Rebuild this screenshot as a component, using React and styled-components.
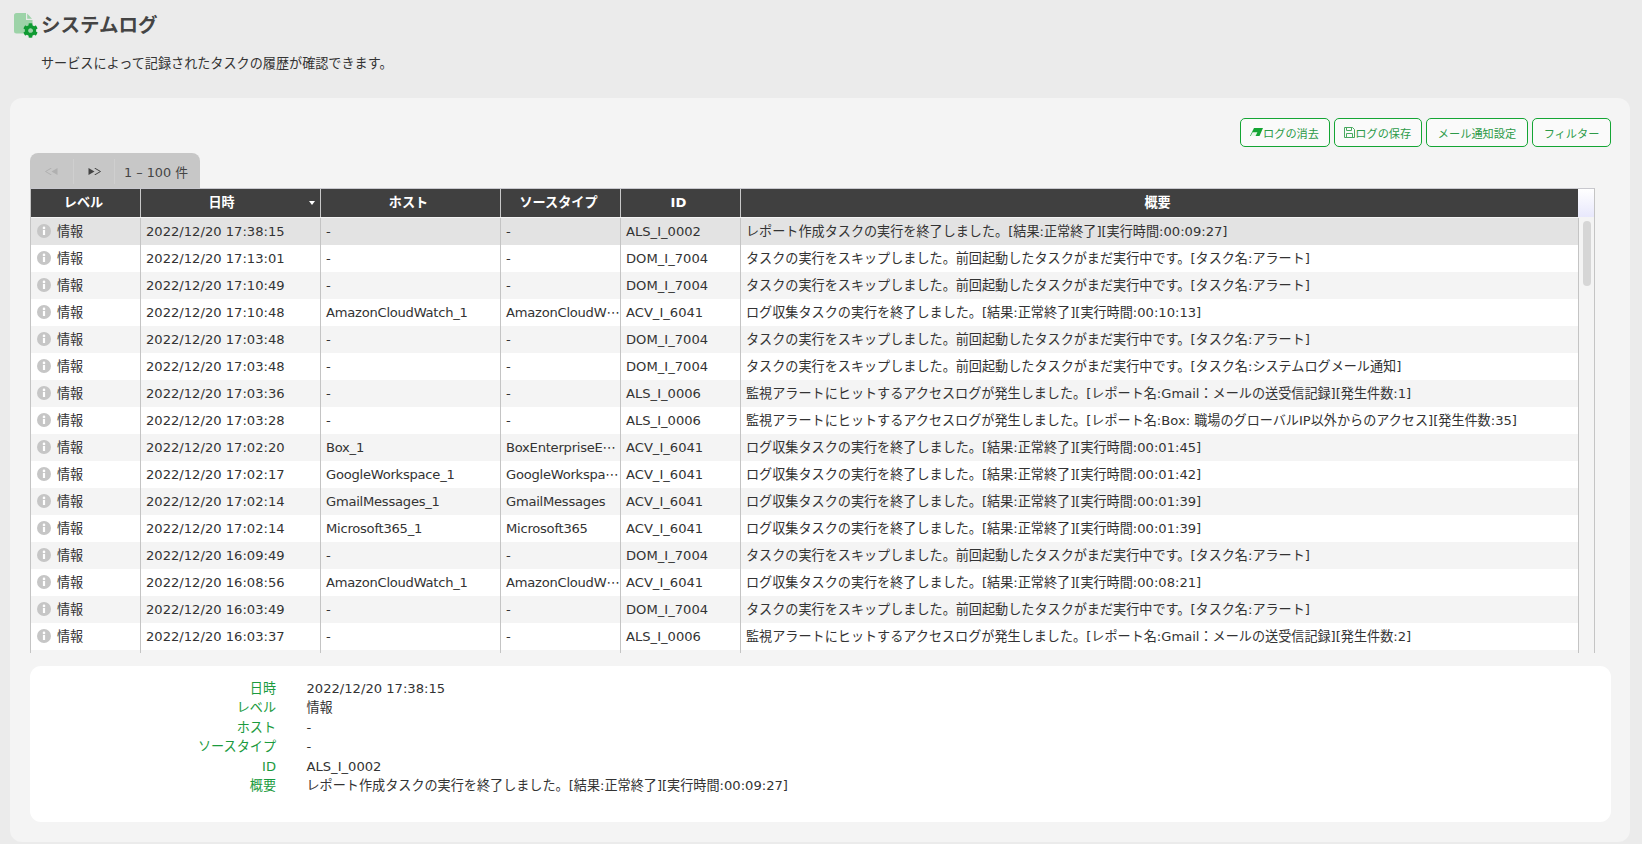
import React from 'react';
import styled, { createGlobalStyle } from 'styled-components';
import { FaCog } from 'react-icons/fa';

const Global = createGlobalStyle`
  html, body { margin: 0; padding: 0; background: #ebebeb; }
  body { font-family: "DejaVu Sans", "Noto Sans CJK JP", sans-serif; font-size: 13.12px; color: #333; overflow: hidden; }
  * { box-sizing: border-box; }
`;

const COLS = '109px 180px 180px 120px 120px 1fr';

const Page = styled.div`height: 844px; display: flex; flex-direction: column; padding: 0 12px 2px 10px;`;
const PageHead = styled.header`height: 98px; display: flex; flex-direction: column; padding: 13px 0 0 4px;`;
const TitleRow = styled.div`display: flex; align-items: center; height: 25px; gap: 3px;`;
const TitleIcon = styled.span`position: relative; width: 24px; height: 25px; flex: none; color: #0f9b32; font-size: 15px;
  svg { display: block; }
  svg + svg { position: absolute; right: 0; bottom: 0; }`;
const Title = styled.h1`margin: 0; font-size: 19.5px; font-weight: 700; color: #444; line-height: 25px;`;
const Desc = styled.p`margin: 16px 0 0 27px; line-height: 19px;`;
const Panel = styled.main`flex: 1; background: #f4f4f4; border-radius: 12px; padding: 20px 19px 20px 20px; display: flex; flex-direction: column;`;
const Toolbar = styled.div`display: flex; justify-content: flex-end; gap: 4px; height: 29px; margin-bottom: 6px;`;
const ToolButton = styled.button`height: 29px; padding: 0; background: #fafafa; border: 1px solid #14a534; border-radius: 5px;
  color: #2c9a48; font: inherit; font-size: 11.2px; display: flex; align-items: center; justify-content: center; width: ${p => p.$w}px;`;
const Pager = styled.div`width: 170px; height: 35px; background: #c7c7c7; border-radius: 8px 8px 0 0; display: flex; align-items: center; padding-top: 1px;`;
const PagerBtn = styled.span`width: ${p => p.$w}px; height: 25px; display: flex; align-items: center; justify-content: center; border-right: 1px solid #cfcfcf;`;
const PagerText = styled.span`margin-left: 9px; font-size: 12.8px; color: #444; white-space: nowrap;`;
const Table = styled.section`border-top: 1px solid #c8c8ce; border-left: 1px solid #c4c4c4; border-right: 1px solid #c4c4c4; width: 1565px;`;
const HeadWrap = styled.div`display: flex; height: 29px;`;
const HeadGrid = styled.div`flex: 1; display: grid; grid-template-columns: ${COLS}; background: #404040; height: 28px;`;
const HeadCell = styled.div`position: relative; color: #fff; font-weight: 700; font-size: 13.12px; line-height: 27px; text-align: center; padding-right: ${p => p.$sorted ? 18 : 4}px; border-left: 1px solid #c8c8c8; &:first-child { border-left: 0; }`;
const SortMark = styled.i`position: absolute; right: 5px; top: 12px; border: 3.5px solid transparent; border-top: 4px solid #fff; border-bottom: 0;`;
const Gutter = styled.div`width: 16px; flex: none; height: 28px; background: linear-gradient(#fff, #e8e8fc);`;
const BodyWrap = styled.div`display: flex; height: 434.6px; overflow: hidden;`;
const Rows = styled.div`flex: 1; min-width: 0; overflow: hidden;`;
const Row = styled.div`display: grid; grid-template-columns: ${COLS}; height: 27px; background: ${p => p.$sel ? '#e3e3e3' : p.$odd ? '#f4f4f4' : '#fff'};`;
const Cell = styled.div`line-height: 27px; padding: 0 5px; white-space: nowrap; overflow: hidden; letter-spacing: ${p => p.$tight ? '-0.25px' : 0}; border-left: 1px solid #c4c4c4; color: #333; &:first-child { border-left: 0; }`;
const LevelCell = styled(Cell)`display: flex; align-items: center; gap: 6px; padding-left: 6px; padding-bottom: 1px;`;
const ScrollTrack = styled.div`width: 16px; flex: none; border-left: 1px solid #c4c4c4; padding: 3px 3px 0 4px;`;
const Thumb = styled.div`height: 65px; background: #d6d6d6; border-radius: 4px;`;
const Detail = styled.section`margin-top: 13.4px; flex: 1; background: #fff; border-radius: 11px; padding: 12.6px 0 0; display: grid; grid-template-columns: 246px 1fr; column-gap: 30.5px; grid-auto-rows: 19.5px; align-content: start;`;
const DetailKey = styled.div`text-align: right; color: #1b9b3e; line-height: 19.5px;`;
const DetailVal = styled.div`line-height: 19.5px; color: #333;`;

const Info = () => (
  <svg width="14" height="14" viewBox="0 0 14 14" style={{ flex: 'none' }}>
    <circle cx="7" cy="7" r="7" fill="#c6c6c6" />
    <circle cx="7" cy="3.9" r="1.3" fill="#fff" />
    <rect x="5.9" y="6" width="2.2" height="5" fill="#fff" />
  </svg>
);
const FileGlyph = () => (
  <svg width="20" height="23" viewBox="0 0 20 23">
    <path d="M2.5 0H12V7H18.5V18a2.5 2.5 0 0 1-2.5 2.5H2.5A2.5 2.5 0 0 1 0 18V2.5A2.5 2.5 0 0 1 2.5 0Z" fill="#9dd3a8" />
    <path d="M13.2 0.6 18 5.8H13.2Z" fill="#9dd3a8" />
  </svg>
);
const Eraser = () => (
  <svg width="13" height="9" viewBox="0 0 13 9" style={{ flex: 'none' }}>
    <path d="M4 0H13L9.5 8H0Z" fill="#14a534" />
    <path d="M.6 8 2.6 4.2H7.4L5.6 8Z" fill="#e8f5ea" />
  </svg>
);
const Floppy = () => (
  <svg width="11" height="11" viewBox="0 0 11 11" style={{ flex: 'none' }} fill="none" stroke="#48a95f" strokeWidth="1">
    <path d="M.5.5H8.5L10.5 2.5V10.5H.5Z" />
    <path d="M2.5.5V3.5H7.5V.5M2.5 10.5V6.5H8.5V10.5" />
  </svg>
);
const PrevGlyph = () => (
  <svg width="13" height="7" viewBox="0 0 13 7">
    <path d="M6.5 0 0.5 3.5 6.5 7" fill="none" stroke="#b0b0b0" strokeWidth="1" />
    <path d="M12.5 0V7L6.5 3.5Z" fill="#b0b0b0" />
  </svg>
);
const NextGlyph = () => (
  <svg width="13" height="7" viewBox="0 0 13 7">
    <path d="M0.5 0V7L6.5 3.5Z" fill="#444" />
    <path d="M6.5 0 12.5 3.5 6.5 7" fill="none" stroke="#444" strokeWidth="1" />
  </svg>
);

const SKIP = 'タスクの実行をスキップしました。前回起動したタスクがまだ実行中です。';
const rows = [
  ['2022/12/20 17:38:15', '-', '-', 'ALS_I_0002', 'レポート作成タスクの実行を終了しました。[結果:正常終了][実行時間:00:09:27]'],
  ['2022/12/20 17:13:01', '-', '-', 'DOM_I_7004', SKIP + '[タスク名:アラート]'],
  ['2022/12/20 17:10:49', '-', '-', 'DOM_I_7004', SKIP + '[タスク名:アラート]'],
  ['2022/12/20 17:10:48', 'AmazonCloudWatch_1', 'AmazonCloudW⋯', 'ACV_I_6041', 'ログ収集タスクの実行を終了しました。[結果:正常終了][実行時間:00:10:13]'],
  ['2022/12/20 17:03:48', '-', '-', 'DOM_I_7004', SKIP + '[タスク名:アラート]'],
  ['2022/12/20 17:03:48', '-', '-', 'DOM_I_7004', SKIP + '[タスク名:システムログメール通知]'],
  ['2022/12/20 17:03:36', '-', '-', 'ALS_I_0006', '監視アラートにヒットするアクセスログが発生しました。[レポート名:Gmail：メールの送受信記録][発生件数:1]'],
  ['2022/12/20 17:03:28', '-', '-', 'ALS_I_0006', '監視アラートにヒットするアクセスログが発生しました。[レポート名:Box: 職場のグローバルIP以外からのアクセス][発生件数:35]'],
  ['2022/12/20 17:02:20', 'Box_1', 'BoxEnterpriseE⋯', 'ACV_I_6041', 'ログ収集タスクの実行を終了しました。[結果:正常終了][実行時間:00:01:45]'],
  ['2022/12/20 17:02:17', 'GoogleWorkspace_1', 'GoogleWorkspa⋯', 'ACV_I_6041', 'ログ収集タスクの実行を終了しました。[結果:正常終了][実行時間:00:01:42]'],
  ['2022/12/20 17:02:14', 'GmailMessages_1', 'GmailMessages', 'ACV_I_6041', 'ログ収集タスクの実行を終了しました。[結果:正常終了][実行時間:00:01:39]'],
  ['2022/12/20 17:02:14', 'Microsoft365_1', 'Microsoft365', 'ACV_I_6041', 'ログ収集タスクの実行を終了しました。[結果:正常終了][実行時間:00:01:39]'],
  ['2022/12/20 16:09:49', '-', '-', 'DOM_I_7004', SKIP + '[タスク名:アラート]'],
  ['2022/12/20 16:08:56', 'AmazonCloudWatch_1', 'AmazonCloudW⋯', 'ACV_I_6041', 'ログ収集タスクの実行を終了しました。[結果:正常終了][実行時間:00:08:21]'],
  ['2022/12/20 16:03:49', '-', '-', 'DOM_I_7004', SKIP + '[タスク名:アラート]'],
  ['2022/12/20 16:03:37', '-', '-', 'ALS_I_0006', '監視アラートにヒットするアクセスログが発生しました。[レポート名:Gmail：メールの送受信記録][発生件数:2]'],
];
const heads = ['レベル', '日時', 'ホスト', 'ソースタイプ', 'ID', '概要'];
const detail = [
  ['日時', '2022/12/20 17:38:15'], ['レベル', '情報'], ['ホスト', '-'], ['ソースタイプ', '-'], ['ID', 'ALS_I_0002'],
  ['概要', 'レポート作成タスクの実行を終了しました。[結果:正常終了][実行時間:00:09:27]'],
];

export default function App() {
  return (
    <Page>
      <Global />
      <PageHead>
        <TitleRow>
          <TitleIcon><FileGlyph /><FaCog /></TitleIcon>
          <Title>システムログ</Title>
        </TitleRow>
        <Desc>サービスによって記録されたタスクの履歴が確認できます。</Desc>
      </PageHead>
      <Panel>
        <Toolbar>
          <ToolButton $w={90}><Eraser />ログの消去</ToolButton>
          <ToolButton $w={88.5}><Floppy />ログの保存</ToolButton>
          <ToolButton $w={102}>メール通知設定</ToolButton>
          <ToolButton $w={79}>フィルター</ToolButton>
        </Toolbar>
        <Pager>
          <PagerBtn $w={44}><PrevGlyph /></PagerBtn>
          <PagerBtn $w={41}><NextGlyph /></PagerBtn>
          <PagerText>1 – 100 件</PagerText>
        </Pager>
        <Table>
          <HeadWrap>
            <HeadGrid>
              {heads.map((h, i) => <HeadCell key={h} $sorted={i === 1}>{h}{i === 1 && <SortMark />}</HeadCell>)}
            </HeadGrid>
            <Gutter />
          </HeadWrap>
          <BodyWrap>
            <Rows>
              {rows.map((r, i) => (
                <Row key={i} $sel={i === 0} $odd={i % 2 === 0}>
                  <LevelCell><Info />情報</LevelCell>
                  {r.map((c, j) => <Cell key={j} $tight={j === 1 || j === 2}>{c}</Cell>)}
                </Row>
              ))}
              <Row $odd>
                <Cell /><Cell /><Cell /><Cell /><Cell /><Cell />
              </Row>
            </Rows>
            <ScrollTrack><Thumb /></ScrollTrack>
          </BodyWrap>
        </Table>
        <Detail>
          {detail.map(([k, v]) => (
            <React.Fragment key={k}>
              <DetailKey>{k}</DetailKey>
              <DetailVal>{v}</DetailVal>
            </React.Fragment>
          ))}
        </Detail>
      </Panel>
    </Page>
  );
}
